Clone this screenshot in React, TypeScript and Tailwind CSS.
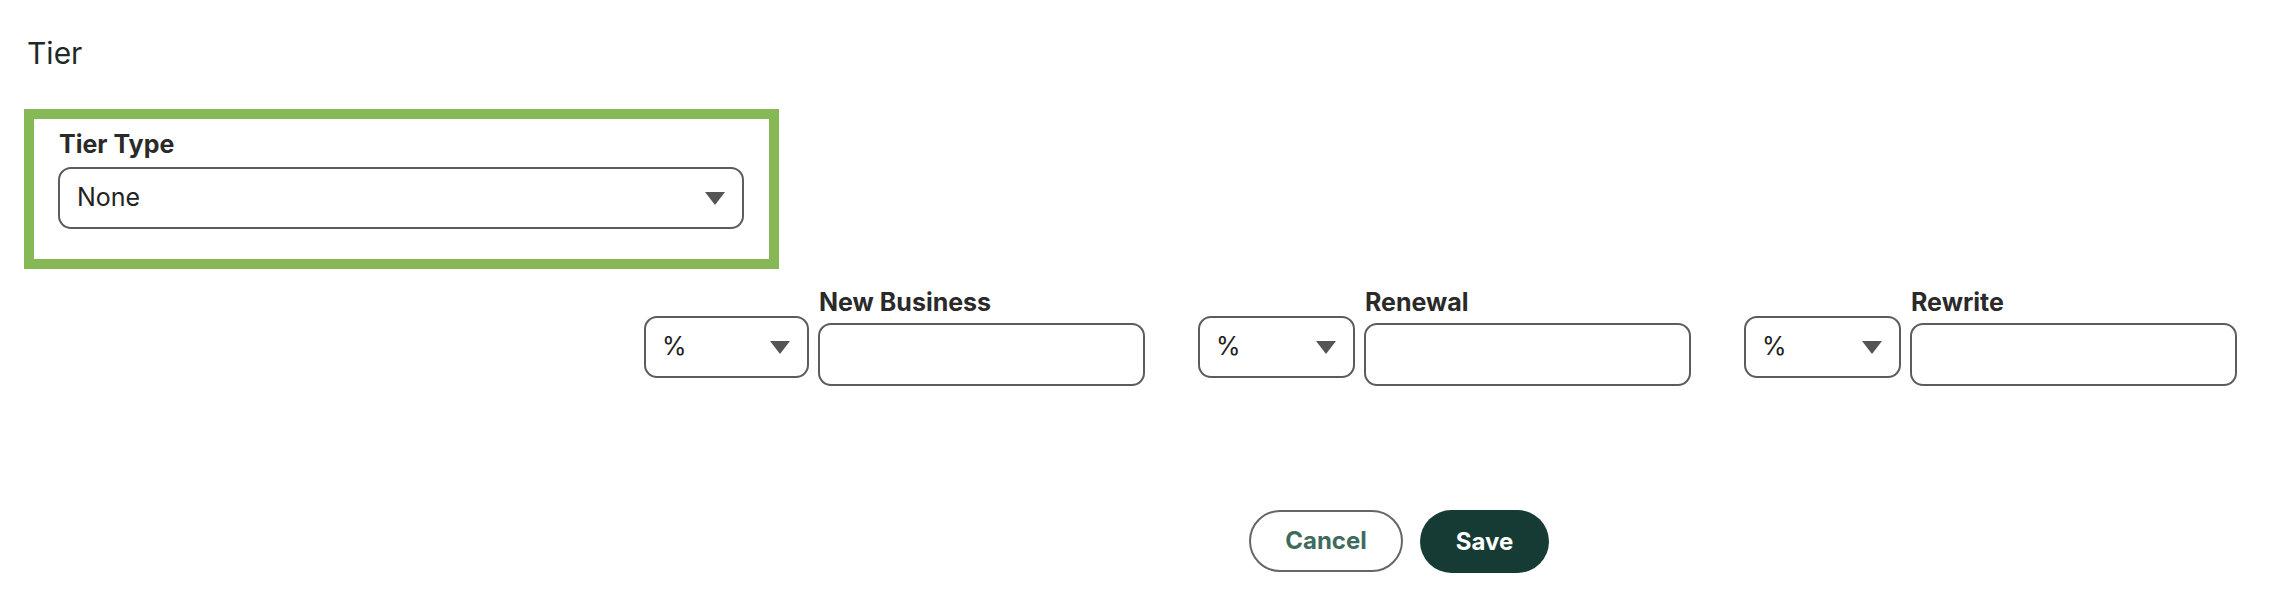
import { useState } from "react";

const font = { fontFamily: "Inter, 'Noto Sans', sans-serif" };

const Caret = () => (
  <svg width="20" height="13" viewBox="0 0 20 13" className="shrink-0">
    <path d="M0 0 H20 L10 13 Z" fill="#555555" />
  </svg>
);

const UnitSelect = ({ width }: { width: string }) => (
  <div
    className={`mt-[29px] flex h-[62px] ${width} shrink-0 items-center justify-between rounded-[13px] border-2 border-[#5c5c5c] bg-white pl-4 pr-[17px] text-[25px] text-[#222]`}
  >
    <span>%</span>
    <Caret />
  </div>
);

const RateField = ({ label, selectWidth }: { label: string; selectWidth: string }) => {
  const [value, setValue] = useState("");
  return (
    <div className="flex items-start gap-[9px]">
      <UnitSelect width={selectWidth} />
      <div className="flex flex-col">
        <label className="mb-[6px] pl-[1px] text-[25px] font-bold leading-[30px] text-[#2a2a2a]">
          {label}
        </label>
        <input
          value={value}
          onChange={(e) => setValue(e.target.value)}
          className="h-[63px] w-[327px] rounded-[13px] border-2 border-[#5c5c5c] bg-white px-4 text-[25px] outline-none"
        />
      </div>
    </div>
  );
};

export default function App() {
  return (
    <div className="min-h-[590px] w-[2290px] bg-white" style={font}>
      <h2 className="pl-[27px] pt-[35px] text-[30px] leading-[36px] text-[#1c2b27]">Tier</h2>

      {/* Tier type, highlighted */}
      <div className="ml-[24px] mt-[38px] w-[755px] border-[10px] border-[#86b955] px-[24px] pb-[30px] pt-[10px]">
        <label className="block pl-[1px] text-[25px] font-bold leading-[30px] text-[#2a2a2a]">
          Tier Type
        </label>
        <div className="mt-[8px] flex h-[62px] w-[686px] items-center justify-between rounded-[13px] border-2 border-[#5c5c5c] pl-[17px] pr-[17px] text-[25px] text-[#222]">
          <span>None</span>
          <Caret />
        </div>
      </div>

      {/* Commission rates */}
      <div className="mt-[18px] flex justify-end gap-[53px] pr-[53px]">
        <RateField label="New Business" selectWidth="w-[165px]" />
        <RateField label="Renewal" selectWidth="w-[157px]" />
        <RateField label="Rewrite" selectWidth="w-[157px]" />
      </div>

      <div className="ml-[1249px] mt-[124px] flex gap-[17px]">
        <button className="h-[62px] w-[154px] rounded-full border-2 border-[#666] bg-white text-[24px] font-bold text-[#3f6b5e]">
          Cancel
        </button>
        <button className="h-[63px] w-[129px] rounded-full bg-[#163b35] text-[24px] font-bold text-white">
          Save
        </button>
      </div>
    </div>
  );
}
